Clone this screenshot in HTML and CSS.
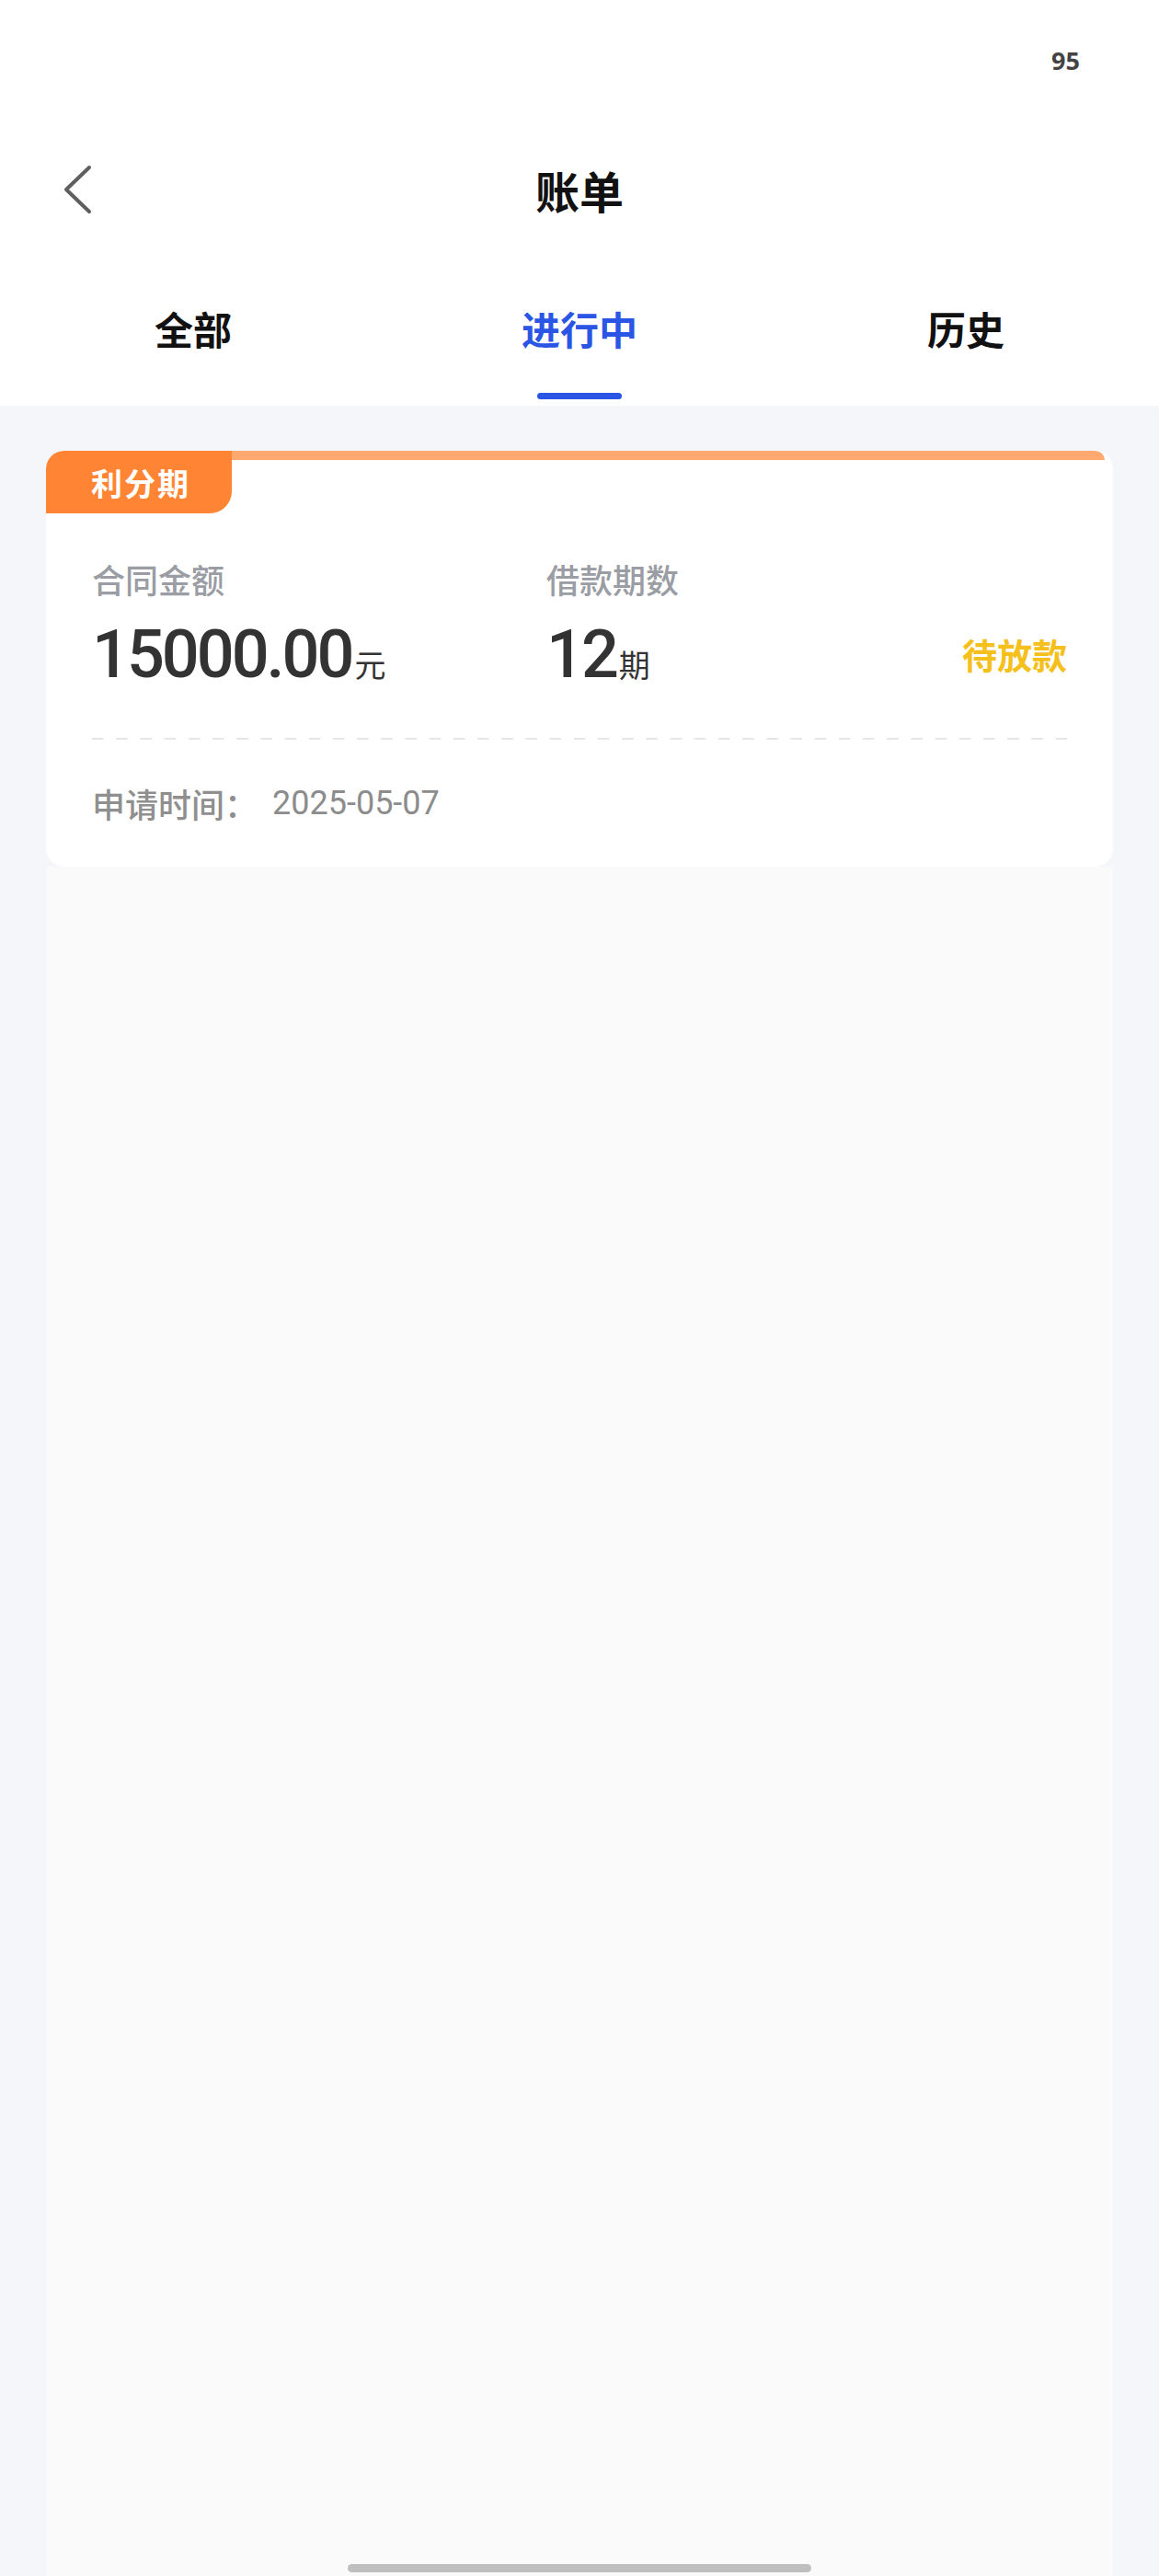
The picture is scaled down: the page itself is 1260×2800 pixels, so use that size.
FILE: index.html
```html
<!DOCTYPE html>
<html>
<head>
  <meta charset="utf-8">
  <title>账单</title>
  <link rel="stylesheet" href="styles.css">
</head>
<body>
  <div class="page">
    <div class="header">
      <div class="status-bar">
        <span class="battery">95</span>
      </div>
      <div class="nav-bar">
        <div class="nav-back">
          <svg width="34" height="56" viewBox="0 0 34 56">
            <polyline points="29,4 4,28 29,52" fill="none" stroke="#5f5f5f" stroke-width="4" stroke-linecap="round" stroke-linejoin="round"/>
          </svg>
        </div>
        <h1 class="nav-title">账单</h1>
        <div></div>
      </div>
      <div class="tabs">
        <div class="tab">
          <span class="tab-text">全部</span>
          <span class="tab-line"></span>
        </div>
        <div class="tab active">
          <span class="tab-text">进行中</span>
          <span class="tab-line"></span>
        </div>
        <div class="tab">
          <span class="tab-text">历史</span>
          <span class="tab-line"></span>
        </div>
      </div>
    </div>

    <div class="content">
      <div class="bill-card">
        <div class="card-top">
          <div class="card-badge">利分期</div>
          <div class="card-strip"></div>
        </div>
        <div class="card-body">
          <div class="info-row">
            <div class="info-col amount-col">
              <div class="info-label">合同金额</div>
              <div class="info-value">15000.00<span class="unit">元</span></div>
            </div>
            <div class="info-col">
              <div class="info-label">借款期数</div>
              <div class="info-value">12<span class="unit">期</span></div>
            </div>
            <div class="bill-status">待放款</div>
          </div>
          <div class="dashed"></div>
          <div class="apply-row">
            <span class="apply-label">申请时间：</span>
            <span class="apply-date">2025-05-07</span>
          </div>
        </div>
      </div>
      <div class="list-rest"></div>
    </div>
  </div>
  <div class="home-bar"></div>
</body>
</html>
```

FILE: styles.css
```css
body {
  margin: 0;
  background-color: #f5f6fa;
  font-family: "Noto Sans CJK SC", "Noto Sans", sans-serif;
}

.page {
  min-height: 2800px;
  display: flex;
  flex-direction: column;
}

.header {
  background-color: #fff;
}

.status-bar {
  height: 130px;
  display: flex;
  align-items: center;
  justify-content: flex-end;
  padding-right: 86px;
}

.battery {
  font-family: "Noto Sans", sans-serif;
  font-size: 27px;
  font-weight: 700;
  color: #444;
}

.nav-bar {
  height: 152px;
  display: grid;
  grid-template-columns: 1fr auto 1fr;
  align-items: center;
}

.nav-back {
  padding-left: 68px;
  display: flex;
  align-items: center;
}

.nav-title {
  margin: 0;
  font-size: 48px;
  line-height: 48px;
  font-weight: 700;
  color: #111;
}

.tabs {
  display: grid;
  grid-template-columns: 1fr 1fr 1fr;
  height: 159px;
}

.tab {
  display: flex;
  flex-direction: column;
  align-items: center;
  padding-top: 54px;
}

.tab-text {
  font-size: 42px;
  line-height: 42px;
  font-weight: 700;
  color: #111;
}

.tab-line {
  margin-top: 49px;
  width: 92px;
  height: 7px;
  border-radius: 4px;
}

.tab.active .tab-text {
  color: #2a55e5;
}

.tab.active .tab-line {
  background-color: #2a55e5;
}

.content {
  flex: 1;
  display: flex;
  flex-direction: column;
  padding: 49px 50px 0;
}

.bill-card {
  background-color: #fff;
  border-radius: 20px;
  overflow: hidden;
}

.card-top {
  display: flex;
  align-items: flex-start;
}

.card-badge {
  width: 202px;
  height: 68px;
  display: flex;
  align-items: center;
  justify-content: center;
  background-color: #ff8534;
  border-bottom-right-radius: 24px;
  color: #fff;
  font-size: 34px;
  font-weight: 700;
  letter-spacing: 2px;
  padding-left: 4px;
  box-sizing: border-box;
}

.card-strip {
  flex: 1;
  height: 10px;
  margin-right: 9px;
  background-color: #ffa86f;
  border-top-right-radius: 10px;
}

.card-body {
  padding: 53px 50px 51px;
}

.info-row {
  display: flex;
  align-items: flex-end;
}

.info-col {
  display: flex;
  flex-direction: column;
}

.amount-col {
  width: 494px;
}

.info-label {
  font-size: 36px;
  line-height: 36px;
  font-weight: 500;
  color: #9a9da3;
}

.info-value {
  margin-top: 29px;
  font-family: "Roboto", sans-serif;
  font-size: 72px;
  line-height: 72px;
  font-weight: 500;
  letter-spacing: -3px;
  color: #333;
}

.unit {
  font-family: "Noto Sans CJK SC", sans-serif;
  font-size: 34px;
  line-height: 34px;
  font-weight: 400;
  letter-spacing: 0;
  margin-left: 3px;
}

.bill-status {
  margin-left: auto;
  margin-bottom: 18px;
  font-size: 38px;
  line-height: 38px;
  font-weight: 700;
  color: #f5c01c;
}

.dashed {
  margin-top: 54px;
  margin-right: -2px;
  height: 2px;
  background: linear-gradient(to right, #e6e6e6 13px, transparent 0) 0 0 / 26.2px 2px repeat-x;
}

.apply-row {
  margin-top: 51px;
  display: flex;
  align-items: center;
  line-height: 36px;
}

.apply-label {
  font-size: 36px;
  font-weight: 500;
  color: #8f8f8f;
}

.apply-date {
  margin-left: 16px;
  font-family: "Roboto", sans-serif;
  font-size: 36px;
  color: #8c8c8c;
}

.list-rest {
  flex: 1;
  background-color: #fafafa;
}

.home-bar {
  position: fixed;
  left: 378px;
  bottom: 4px;
  width: 504px;
  height: 9px;
  border-radius: 5px;
  background-color: #bfbfbf;
}
```
